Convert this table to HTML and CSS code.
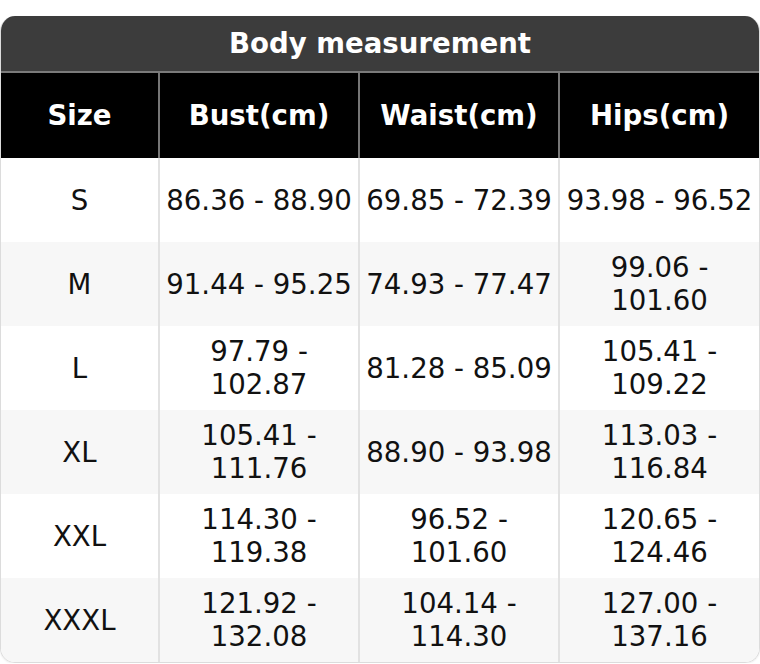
FILE: index.html
```html
<!DOCTYPE html>
<html lang="en">
<head>
<meta charset="utf-8">
<title>Body measurement</title>
<link rel="stylesheet" href="styles.css">
</head>
<body>
<div class="chart">
  <div class="title">Body measurement</div>
  <div class="grid">
    <div class="cell head">Size</div>
    <div class="cell head">Bust(cm)</div>
    <div class="cell head">Waist(cm)</div>
    <div class="cell head">Hips(cm)</div>

    <div class="cell">S</div>
    <div class="cell">86.36 - 88.90</div>
    <div class="cell">69.85 - 72.39</div>
    <div class="cell">93.98 - 96.52</div>

    <div class="cell alt">M</div>
    <div class="cell alt">91.44 - 95.25</div>
    <div class="cell alt">74.93 - 77.47</div>
    <div class="cell alt">99.06 - 101.60</div>

    <div class="cell">L</div>
    <div class="cell">97.79 - 102.87</div>
    <div class="cell">81.28 - 85.09</div>
    <div class="cell">105.41 - 109.22</div>

    <div class="cell alt">XL</div>
    <div class="cell alt">105.41 - 111.76</div>
    <div class="cell alt">88.90 - 93.98</div>
    <div class="cell alt">113.03 - 116.84</div>

    <div class="cell">XXL</div>
    <div class="cell">114.30 - 119.38</div>
    <div class="cell">96.52 - 101.60</div>
    <div class="cell">120.65 - 124.46</div>

    <div class="cell alt">XXXL</div>
    <div class="cell alt">121.92 - 132.08</div>
    <div class="cell alt">104.14 - 114.30</div>
    <div class="cell alt">127.00 - 137.16</div>
  </div>
</div>
</body>
</html>
```

FILE: styles.css
```css
html, body {
  margin: 0;
  padding: 0;
  background: #ffffff;
}

body {
  font-family: "DejaVu Sans", "Liberation Sans", sans-serif;
  color: #111111;
}

.chart {
  margin-top: 16px;
  width: 760px;
  border-radius: 15px;
  overflow: hidden;
  border: 1px solid #dcdcdc;
  border-top: none;
  box-sizing: border-box;
  box-shadow: 0 1px 2px rgba(0, 0, 0, 0.08);
}

.title {
  height: 57px;
  padding-bottom: 1px;
  background: #3c3c3c;
  color: #ffffff;
  font-weight: bold;
  font-size: 27.6px;
  display: flex;
  align-items: center;
  justify-content: center;
  border-bottom: 2px solid #7a7a7a;
  box-sizing: border-box;
}

.grid {
  display: grid;
  grid-template-columns: 157px 200px 200px 1fr;
  grid-auto-rows: 84px;
  grid-template-rows: 85px;
}

.cell {
  display: flex;
  align-items: center;
  justify-content: center;
  text-align: center;
  font-size: 27.6px;
  line-height: 33px;
  padding: 0 5px;
  background: #ffffff;
  border-left: 2px solid #e2e2e2;
  box-sizing: border-box;
}

.cell:nth-child(4n+1) {
  border-left: none;
}

.alt {
  background: #f7f7f7;
}

.head {
  background: #000000;
  color: #ffffff;
  font-weight: bold;
  border-left-color: #767676;
}
```
